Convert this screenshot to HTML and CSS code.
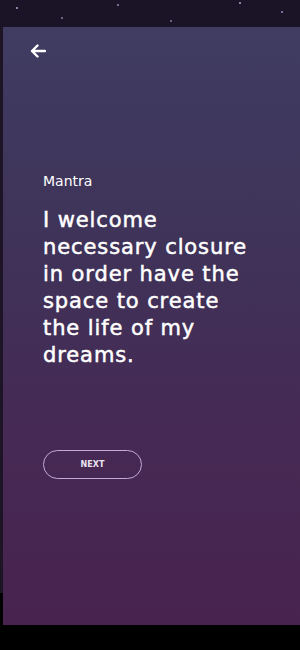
FILE: index.html
```html
<!DOCTYPE html>
<html lang="en">
<head>
    <meta charset="UTF-8">
    <title>Mantra</title>
    <link rel="stylesheet" href="styles.css">
</head>
<body>
    <div class="sky"></div>
    <div class="stage">
        <div class="edge"></div>
        <div class="card">
            <button class="back" aria-label="Back">
                <svg width="16" height="14" viewBox="0 0 16 14">
                    <path d="M15 7H2M7.5 1.5 2 7l5.5 5.5" fill="none" stroke="#fff" stroke-width="2.4" stroke-linecap="round" stroke-linejoin="round"/>
                </svg>
            </button>
            <div class="label">Mantra</div>
            <h1 class="mantra">I welcome necessary closure in order have the space to create the life of my dreams.</h1>
            <button class="next">NEXT</button>
        </div>
    </div>
</body>
</html>
```
FILE: styles.css
```css
body {
    margin: 0;
    background-color: #000;
    font-family: "DejaVu Sans", sans-serif;
    height: 650px;
    overflow: hidden;
}
.sky {
    height: 27px;
    background-color: #1b1326;
    background-image:
        radial-gradient(circle at 17px 8px, #8a80a8 0.8px, transparent 1.2px),
        radial-gradient(circle at 62px 18px, #6d6488 0.7px, transparent 1.1px),
        radial-gradient(circle at 118px 5px, #7a7096 0.7px, transparent 1.1px),
        radial-gradient(circle at 171px 21px, #6d6488 0.7px, transparent 1.1px),
        radial-gradient(circle at 240px 3px, #8a80a8 0.8px, transparent 1.2px),
        radial-gradient(circle at 282px 12px, #7a7096 0.8px, transparent 1.2px);
}
.stage {
    display: flex;
    height: 598px;
}
.edge {
    width: 3px;
    height: 566px;
    background-color: #1d1526;
}
.card {
    flex: 1;
    background: linear-gradient(to bottom, #403c62 0%, #3f3359 35%, #462954 70%, #48234f 100%);
    padding: 17px 0 0 40px;
    color: #fff;
    box-sizing: border-box;
}
.back {
    display: block;
    margin-left: -13px;
    padding: 0;
    width: 16px;
    height: 14px;
    background: none;
    border: 0;
}
.back svg {
    display: block;
}
.label {
    margin-top: 113px;
    font-size: 14px;
    line-height: 20px;
}
.mantra {
    margin: 16px 0 0 0;
    width: 215px;
    font-size: 21px;
    line-height: 27px;
    letter-spacing: 0.9px;
    font-weight: normal;
    -webkit-text-stroke: 0.5px #fff;
}
.next {
    display: block;
    margin-top: 81px;
    width: 99px;
    height: 29px;
    border: 1px solid #c4aad4;
    border-radius: 15px;
    background: none;
    color: #ece2f0;
    font-family: "DejaVu Sans", sans-serif;
    font-size: 8px;
    font-weight: 700;
    padding: 0;
}
```
